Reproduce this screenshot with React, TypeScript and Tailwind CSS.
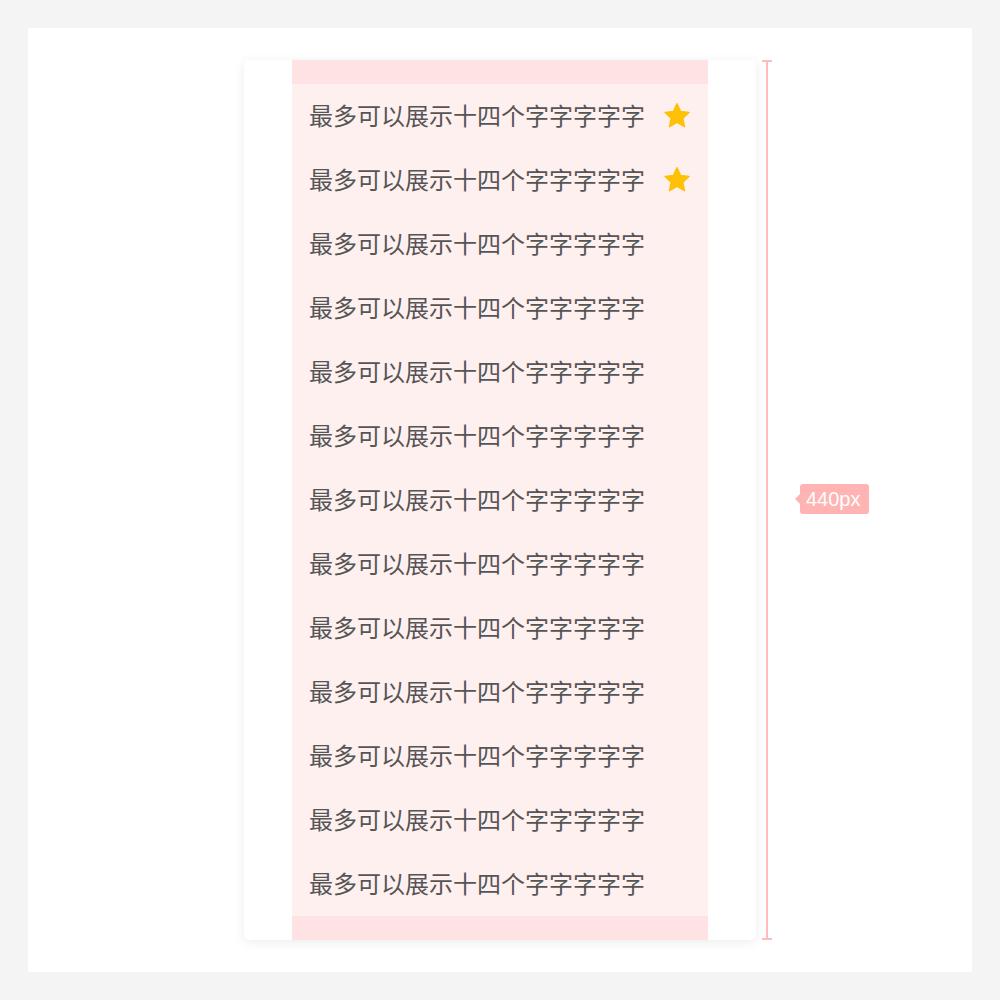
const rows = Array.from({ length: 13 }, (_, i) => ({ text: "最多可以展示十四个字字字字字", starred: i < 2 }));

function StarIcon() {
  return (
    <svg width="30" height="30" viewBox="0 0 24 24" className="shrink-0 -mr-[2px] mt-[2px]">
      <path
        d="M12 2.2l2.9 6.2 6.7.8-5 4.6 1.4 6.7L12 17.1l-6 3.4 1.4-6.7-5-4.6 6.7-.8z"
        fill="#ffc107"
        stroke="#ffc107"
        strokeWidth="1.2"
        strokeLinejoin="round"
      />
    </svg>
  );
}

export default function App() {
  return (
    <div className="w-[1000px] h-[1000px] bg-[#f4f4f4] p-[28px] font-['Noto_Sans_CJK_SC',sans-serif]">
      <div className="h-full bg-white flex justify-center pt-[32px]">
        <div className="relative w-[512px] h-[880px] bg-white rounded-[5px] shadow-[0_2px_12px_rgba(0,0,0,0.08)] flex justify-center">
          <div className="w-[416px] h-full flex flex-col bg-[#fff0f0]">
            <div className="h-[24px] bg-[#ffe2e4]" />
            {rows.map((row, i) => (
              <div key={i} className="h-[64px] flex items-center justify-between pl-[17px] pr-[18px] pb-[3px]">
                <span className="text-[24px] leading-none text-[#555]">{row.text}</span>
                {row.starred && <StarIcon />}
              </div>
            ))}
            <div className="h-[24px] mt-auto bg-[#ffe2e4]" />
          </div>

          {/* height annotation */}
          <div className="absolute left-[518px] top-0 h-full w-[10px] flex flex-col items-center">
            <div className="w-[10px] h-[2px] bg-[#ffbcbc]" />
            <div className="w-[2px] flex-1 bg-[#ffbcbc]" />
            <div className="w-[10px] h-[2px] bg-[#ffbcbc]" />
          </div>
          <div className="absolute left-[556px] top-[424px] h-[30px] pl-[6px] pr-[8px] flex items-center rounded-[3px] bg-[#ffb3b3] text-white text-[20px] font-['Liberation_Sans',sans-serif]">
            <span className="absolute -left-[5px] top-1/2 -translate-y-1/2 w-0 h-0 border-y-[5px] border-y-transparent border-r-[5px] border-r-[#ffb3b3]" />
            440px
          </div>
        </div>
      </div>
    </div>
  );
}
